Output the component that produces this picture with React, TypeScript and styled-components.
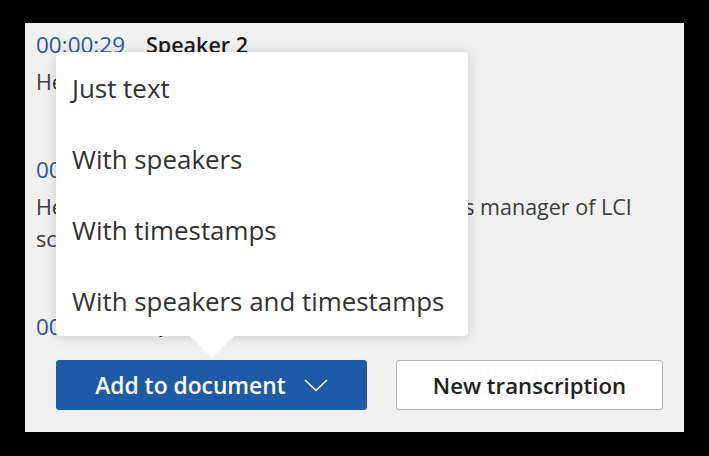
import React from "react";
import styled, { createGlobalStyle } from "styled-components";

const GlobalStyle = createGlobalStyle`
  html, body {
    margin: 0;
    padding: 0;
    background: #000;
  }
  body {
    font-family: "Segoe UI", "Open Sans", "Noto Sans", sans-serif;
  }
`;

const Panel = styled.div`
  position: relative;
  margin: 23px 25px 0;
  width: 659px;
  height: 409px;
  background: #f0f0f0;
  display: flex;
  flex-direction: column;
`;

const Transcript = styled.div`
  flex: 1;
  min-height: 0;
  overflow: hidden;
  padding: 6px 30px 0 11px;
  font-size: 21.5px;
  line-height: 32px;
`;

const Entry = styled.div`
  margin-bottom: 56px;
`;

const EntryHead = styled.div`
  display: flex;
  gap: 21px;
`;

const Stamp = styled.span`
  color: #2b5797;
  font-size: 22.5px;
`;

const Speaker = styled.span`
  color: #1b1b1b;
  font-weight: 600;
`;

const Body = styled.p`
  margin: 5px 0 0;
  color: #3b3b3b;
  white-space: nowrap;

  & + & {
    margin-top: 0;
  }
`;

const Footer = styled.div`
  display: flex;
  gap: 29px;
  padding: 23px 21px 22px 31px;
`;

const Anchor = styled.div`
  position: relative;
`;

const Button = styled.button<{ $primary?: boolean }>`
  display: flex;
  align-items: center;
  justify-content: center;
  gap: 18px;
  height: 50px;
  width: ${(p) => (p.$primary ? "311px" : "267px")};
  border-radius: 3px;
  border: 1px solid ${(p) => (p.$primary ? "#1d5aa7" : "#b3b3b3")};
  background: ${(p) => (p.$primary ? "#1f5aa6" : "#fff")};
  color: ${(p) => (p.$primary ? "#fff" : "#222")};
  font-family: inherit;
  font-size: ${(p) => (p.$primary ? "22.8px" : "22.2px")};
  font-weight: 600;
  padding: 0;
  cursor: pointer;
`;

const Menu = styled.ul`
  position: absolute;
  left: 0;
  bottom: calc(100% + 24px);
  width: 412px;
  margin: 0;
  padding: 0;
  list-style: none;
  background: #fff;
  border-radius: 4px;
  box-shadow: 0 1px 12px rgba(0, 0, 0, 0.16);
  z-index: 2;

  &::after {
    content: "";
    position: absolute;
    left: 134px;
    bottom: -22px;
    border-left: 22px solid transparent;
    border-right: 22px solid transparent;
    border-top: 22px solid #fff;
  }
`;

const MenuItem = styled.li`
  display: flex;
  align-items: center;
  height: 71px;
  padding-left: 16px;
  font-size: 25.9px;
  color: #323232;
  cursor: pointer;
`;

const Chevron = () => (
  <svg width="24" height="13" viewBox="0 0 24 13" fill="none">
    <polyline points="1,1 12,11.5 23,1" stroke="#fff" strokeWidth="1.6" />
  </svg>
);

const entries = [
  { time: "00:00:29", who: "Speaker 2", lines: ["Hello everyone, thanks for joining."] },
  {
    time: "00:00:41",
    who: "Speaker 1",
    lines: [
      "Hello, I'm Dana Ortiz and I'm the operations manager of LCI",
      "schools in the northern district today.",
    ],
  },
  { time: "00:01:06", who: "Speaker 2", lines: ["Great, welcome to the call."] },
];

const options = ["Just text", "With speakers", "With timestamps", "With speakers and timestamps"];

export default function App() {
  return (
    <>
      <GlobalStyle />
      <Panel>
        <Transcript>
          {entries.map((e) => (
            <Entry key={e.time}>
              <EntryHead>
                <Stamp>{e.time}</Stamp>
                <Speaker>{e.who}</Speaker>
              </EntryHead>
              {e.lines.map((l) => (
                <Body key={l}>{l}</Body>
              ))}
            </Entry>
          ))}
        </Transcript>
        <Footer>
          <Anchor>
            <Menu>
              {options.map((o) => (
                <MenuItem key={o}>{o}</MenuItem>
              ))}
            </Menu>
            <Button $primary>
              Add to document
              <Chevron />
            </Button>
          </Anchor>
          <Button>New transcription</Button>
        </Footer>
      </Panel>
    </>
  );
}
